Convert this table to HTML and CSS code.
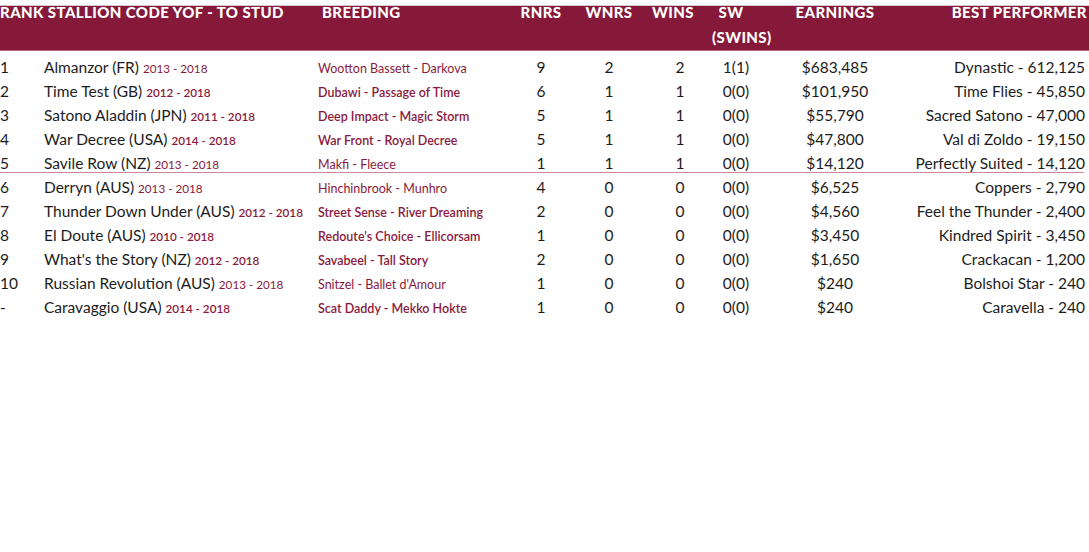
FILE: index.html
```html
<!DOCTYPE html>
<html>
<head>
<meta charset="utf-8">
<link rel="stylesheet" href="styles.css">
</head>
<body>
<div class="table">
  <div class="head">
    <div class="h h-stallion">RANK STALLION CODE YOF - TO STUD</div>
    <div class="h h-breeding">BREEDING</div>
    <div class="h c">RNRS</div>
    <div class="h c">WNRS</div>
    <div class="h c h-wins">WINS</div>
    <div class="h c h-sw">SW<br>(SWINS)</div>
    <div class="h c">EARNINGS</div>
    <div class="h r">BEST PERFORMER</div>
  </div>

  <div class="row">
    <div class="rank">1</div>
    <div class="name">Almanzor (FR) <span class="yr light">2013 - 2018</span></div>
    <div class="breed light">Wootton Bassett - Darkova</div>
    <div class="c">9</div><div class="c">2</div><div class="c wins">2</div><div class="c">1(1)</div>
    <div class="c">$683,485</div><div class="r">Dynastic - 612,125</div>
  </div>
  <div class="row">
    <div class="rank">2</div>
    <div class="name">Time Test (GB) <span class="yr">2012 - 2018</span></div>
    <div class="breed">Dubawi - Passage of Time</div>
    <div class="c">6</div><div class="c">1</div><div class="c wins">1</div><div class="c">0(0)</div>
    <div class="c">$101,950</div><div class="r">Time Flies - 45,850</div>
  </div>
  <div class="row">
    <div class="rank">3</div>
    <div class="name">Satono Aladdin (JPN) <span class="yr">2011 - 2018</span></div>
    <div class="breed">Deep Impact - Magic Storm</div>
    <div class="c">5</div><div class="c">1</div><div class="c wins">1</div><div class="c">0(0)</div>
    <div class="c">$55,790</div><div class="r">Sacred Satono - 47,000</div>
  </div>
  <div class="row">
    <div class="rank">4</div>
    <div class="name">War Decree (USA) <span class="yr">2014 - 2018</span></div>
    <div class="breed">War Front - Royal Decree</div>
    <div class="c">5</div><div class="c">1</div><div class="c wins">1</div><div class="c">0(0)</div>
    <div class="c">$47,800</div><div class="r">Val di Zoldo - 19,150</div>
  </div>
  <div class="row">
    <div class="rank">5</div>
    <div class="name">Savile Row (NZ) <span class="yr light">2013 - 2018</span></div>
    <div class="breed light">Makfi - Fleece</div>
    <div class="c">1</div><div class="c">1</div><div class="c wins">1</div><div class="c">0(0)</div>
    <div class="c">$14,120</div><div class="r">Perfectly Suited - 14,120</div>
  </div>
  <div class="sep"></div>
  <div class="row">
    <div class="rank">6</div>
    <div class="name">Derryn (AUS) <span class="yr light">2013 - 2018</span></div>
    <div class="breed light">Hinchinbrook - Munhro</div>
    <div class="c">4</div><div class="c">0</div><div class="c wins">0</div><div class="c">0(0)</div>
    <div class="c">$6,525</div><div class="r">Coppers - 2,790</div>
  </div>
  <div class="row">
    <div class="rank">7</div>
    <div class="name">Thunder Down Under (AUS) <span class="yr">2012 - 2018</span></div>
    <div class="breed">Street Sense - River Dreaming</div>
    <div class="c">2</div><div class="c">0</div><div class="c wins">0</div><div class="c">0(0)</div>
    <div class="c">$4,560</div><div class="r">Feel the Thunder - 2,400</div>
  </div>
  <div class="row">
    <div class="rank">8</div>
    <div class="name">El Doute (AUS) <span class="yr">2010 - 2018</span></div>
    <div class="breed">Redoute's Choice - Ellicorsam</div>
    <div class="c">1</div><div class="c">0</div><div class="c wins">0</div><div class="c">0(0)</div>
    <div class="c">$3,450</div><div class="r">Kindred Spirit - 3,450</div>
  </div>
  <div class="row">
    <div class="rank">9</div>
    <div class="name">What's the Story (NZ) <span class="yr">2012 - 2018</span></div>
    <div class="breed">Savabeel - Tall Story</div>
    <div class="c">2</div><div class="c">0</div><div class="c wins">0</div><div class="c">0(0)</div>
    <div class="c">$1,650</div><div class="r">Crackacan - 1,200</div>
  </div>
  <div class="row">
    <div class="rank">10</div>
    <div class="name">Russian Revolution (AUS) <span class="yr light">2013 - 2018</span></div>
    <div class="breed light">Snitzel - Ballet d'Amour</div>
    <div class="c">1</div><div class="c">0</div><div class="c wins">0</div><div class="c">0(0)</div>
    <div class="c">$240</div><div class="r">Bolshoi Star - 240</div>
  </div>
  <div class="row">
    <div class="rank">-</div>
    <div class="name">Caravaggio (USA) <span class="yr">2014 - 2018</span></div>
    <div class="breed">Scat Daddy - Mekko Hokte</div>
    <div class="c">1</div><div class="c">0</div><div class="c wins">0</div><div class="c">0(0)</div>
    <div class="c">$240</div><div class="r">Caravella - 240</div>
  </div>
</div>
</body>
</html>
```
FILE: styles.css
```css
html, body {
  margin: 0;
  padding: 0;
  background: #ffffff;
}
body {
  font-family: Lato, "Open Sans", sans-serif;
  color: #1c1c1c;
  width: 1089px;
  height: 552px;
  overflow: hidden;
}
.table {
  width: 1089px;
}
.head {
  display: grid;
  grid-template-columns: 322px 188px 62px 74px 66px 48px 150px 177px 2px;
  height: 51px;
  background: linear-gradient(to bottom, #ffffff 0, #ffffff 5px, #d9c9ce 5px, #d9c9ce 6px, #86183a 6px, #86183a 50px, #b7667c 50px, #b7667c 51px);
  color: #ffffff;
  font-weight: 900;
  font-size: 15px;
  letter-spacing: 0.4px;
  line-height: 25px;
}
.h {
  white-space: nowrap;
}
.h-wins {
  padding-right: 12px;
}
.h-sw {
  padding-right: 10px;
}
.row {
  display: grid;
  grid-template-columns: 44px 274px 192px 62px 74px 66px 48px 150px 175px 4px;
  align-items: baseline;
  height: 24px;
  line-height: 24px;
  font-size: 15.5px;
  white-space: nowrap;
}
.head + .row {
  margin-top: 4px;
}
.rank {
  text-align: left;
}
.yr {
  color: #8a1a3d;
  font-size: 11.7px;
  font-weight: 600;
}
.breed {
  color: #8a1a3d;
  font-size: 12.5px;
  font-weight: 600;
}
.light {
  font-weight: 400;
}
.c {
  text-align: center;
}
.wins {
  padding-left: 2px;
}
.r {
  text-align: right;
}
.sep {
  height: 1px;
  width: 1084px;
  background: #c9879a;
  margin-top: -3px;
  margin-bottom: 2px;
}
```
